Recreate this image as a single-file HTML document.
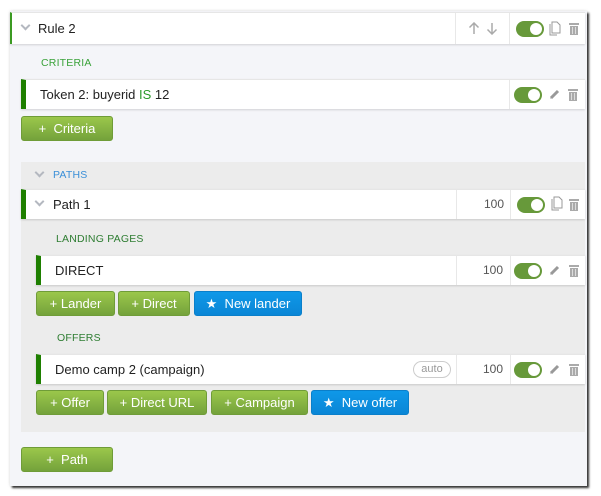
<!DOCTYPE html>
<html><head><meta charset="utf-8"><style>
*{box-sizing:border-box;margin:0;padding:0}
body{width:601px;height:496px;background:#fff;font-family:"Liberation Sans",sans-serif;position:relative;overflow:hidden;font-size:13px;color:#222}
.a{position:absolute}
.card{left:10px;top:11px;width:577px;height:475px;background:#f4f5f9;box-shadow:2px 2px 2px #333, 0 0 3px rgba(0,0,0,.15)}
.row{background:#fff;box-shadow:0 1px 2px rgba(0,0,0,.15);height:30px;border-top:1px solid #e6e6e6}
.row .t{position:absolute;top:7px;font-size:13px}
.vd{position:absolute;top:0;width:1px;height:29px;background:#e8e8e8}
.lbl{font-size:10.5px;letter-spacing:.2px}
.btn{height:25px;border-radius:3px;color:#fff;font-size:13px;text-align:center;line-height:24px;background:linear-gradient(#9bc74b,#74a23b);border:1px solid #6f9c38}
.blue{background:linear-gradient(#0f98e8,#0a86d6);border:1px solid #0a7fca}
.tog{position:absolute;width:28px;height:16px;border-radius:8px;background:#67993a}
.tog::after{content:"";position:absolute;right:2px;top:2px;width:12px;height:12px;border-radius:6px;background:#fff}
.num{position:absolute;top:7px;font-size:12px;color:#555}
.chev{position:absolute;width:7px;height:7px;border-right:2px solid #b4b8c0;border-bottom:2px solid #b4b8c0;transform:rotate(45deg)}
</style></head><body>
<div class="a card"></div>

<div class="a row" style="left:10px;top:12px;width:575px;height:32px;border-left:2px solid #3b9a22">
  <div class="chev" style="left:10px;top:9px"></div>
  <div class="t" style="left:26px;top:8px">Rule 2</div>
  <div class="vd" style="left:443px;height:31px"></div>
  <div class="vd" style="left:497px;height:31px"></div>
  <svg class="a" style="left:456px;top:9px" width="12" height="13" viewBox="0 0 12 13"><path d="M6 12V1M1.5 5.5L6 1l4.5 4.5" fill="none" stroke="#aaa" stroke-width="1.5"/></svg>
  <svg class="a" style="left:474px;top:9px" width="12" height="13" viewBox="0 0 12 13"><path d="M6 1v11M1.5 7.5L6 12l4.5-4.5" fill="none" stroke="#aaa" stroke-width="1.5"/></svg>
  <div class="tog" style="left:504px;top:8px"></div>
  <svg class="a" style="left:537px;top:8px" width="12" height="15" viewBox="0 0 12 15"><path d="M3 1h5l3 3v8H3z M1 3v11h7" fill="#fff" stroke="#999" stroke-width="1"/></svg>
  <svg class="a" style="left:557px;top:9px" width="10" height="13" viewBox="0 0 10 13"><rect x="0" y="1" width="10" height="2" fill="#aaa"/><rect x="1" y="4" width="8" height="9" fill="#aaa"/><path d="M3.5 5v7M6.5 5v7" stroke="#ddd"/></svg>
</div>

<div class="a lbl" style="left:41px;top:57px;color:#3aa23a">CRITERIA</div>
<div class="a row" style="left:21px;top:79px;width:564px;border-left:5px solid #1e7f00">
  <div class="t" style="left:14px">Token 2: buyerid <span style="color:#2a9a2a">IS</span> 12</div>
  <div class="vd" style="left:483px"></div>
  <div class="tog" style="left:488px;top:7px"></div>
  <svg class="a" style="left:523px;top:8px" width="12" height="12" viewBox="0 0 12 12"><path d="M2 10L9 3" stroke="#999" stroke-width="3"/><path d="M1 11l1.5-2.5 1 1z" fill="#999"/></svg>
  <svg class="a" style="left:542px;top:8px" width="10" height="13" viewBox="0 0 10 13"><rect x="0" y="1" width="10" height="2" fill="#aaa"/><rect x="1" y="4" width="8" height="9" fill="#aaa"/><path d="M3.5 5v7M6.5 5v7" stroke="#ddd"/></svg>
</div>
<div class="a btn" style="left:21px;top:116px;width:92px">+&nbsp; Criteria</div>

<div class="a" style="left:21px;top:162px;width:564px;height:270px;background:#ececec"></div>
<div class="chev" style="left:36px;top:169px"></div>
<div class="a lbl" style="left:53px;top:169px;color:#3a8fd8">PATHS</div>

<div class="a row" style="left:21px;top:189px;width:564px;border-left:5px solid #1e7f00">
  <div class="chev" style="left:10px;top:8px"></div>
  <div class="t" style="left:27px">Path 1</div>
  <div class="vd" style="left:430px"></div>
  <div class="num" style="left:458px">100</div>
  <div class="vd" style="left:484px"></div>
  <div class="tog" style="left:491px;top:7px"></div>
  <svg class="a" style="left:525px;top:6px" width="12" height="15" viewBox="0 0 12 15"><path d="M3 1h5l3 3v8H3z M1 3v11h7" fill="#fff" stroke="#999" stroke-width="1"/></svg>
  <svg class="a" style="left:543px;top:8px" width="10" height="13" viewBox="0 0 10 13"><rect x="0" y="1" width="10" height="2" fill="#aaa"/><rect x="1" y="4" width="8" height="9" fill="#aaa"/><path d="M3.5 5v7M6.5 5v7" stroke="#ddd"/></svg>
</div>

<div class="a lbl" style="left:56px;top:233px;color:#2e7d32">LANDING PAGES</div>
<div class="a row" style="left:36px;top:255px;width:549px;border-left:5px solid #1e7f00">
  <div class="t" style="left:14px">DIRECT</div>
  <div class="vd" style="left:415px"></div>
  <div class="num" style="left:442px">100</div>
  <div class="vd" style="left:469px"></div>
  <div class="tog" style="left:473px;top:7px"></div>
  <svg class="a" style="left:508px;top:8px" width="12" height="12" viewBox="0 0 12 12"><path d="M2 10L9 3" stroke="#999" stroke-width="3"/><path d="M1 11l1.5-2.5 1 1z" fill="#999"/></svg>
  <svg class="a" style="left:528px;top:8px" width="10" height="13" viewBox="0 0 10 13"><rect x="0" y="1" width="10" height="2" fill="#aaa"/><rect x="1" y="4" width="8" height="9" fill="#aaa"/><path d="M3.5 5v7M6.5 5v7" stroke="#ddd"/></svg>
</div>
<div class="a btn" style="left:36px;top:291px;width:79px">+ Lander</div>
<div class="a btn" style="left:118px;top:291px;width:72px">+ Direct</div>
<div class="a btn blue" style="left:194px;top:291px;width:108px">★&nbsp; New lander</div>

<div class="a lbl" style="left:57px;top:332px;color:#2e7d32">OFFERS</div>
<div class="a row" style="left:36px;top:354px;width:549px;border-left:5px solid #1e7f00">
  <div class="t" style="left:14px">Demo camp 2 (campaign)</div>
  <div class="a" style="left:372px;top:6px;width:38px;height:17px;border:1px solid #ccc;border-radius:9px;font-size:11px;color:#999;text-align:center;line-height:15px">auto</div>
  <div class="vd" style="left:415px"></div>
  <div class="num" style="left:442px">100</div>
  <div class="vd" style="left:469px"></div>
  <div class="tog" style="left:473px;top:7px"></div>
  <svg class="a" style="left:508px;top:8px" width="12" height="12" viewBox="0 0 12 12"><path d="M2 10L9 3" stroke="#999" stroke-width="3"/><path d="M1 11l1.5-2.5 1 1z" fill="#999"/></svg>
  <svg class="a" style="left:528px;top:8px" width="10" height="13" viewBox="0 0 10 13"><rect x="0" y="1" width="10" height="2" fill="#aaa"/><rect x="1" y="4" width="8" height="9" fill="#aaa"/><path d="M3.5 5v7M6.5 5v7" stroke="#ddd"/></svg>
</div>
<div class="a btn" style="left:36px;top:390px;width:68px">+ Offer</div>
<div class="a btn" style="left:107px;top:390px;width:100px">+ Direct URL</div>
<div class="a btn" style="left:211px;top:390px;width:97px">+ Campaign</div>
<div class="a btn blue" style="left:311px;top:390px;width:98px">★&nbsp; New offer</div>

<div class="a btn" style="left:21px;top:447px;width:92px">+&nbsp; Path</div>
</body></html>
